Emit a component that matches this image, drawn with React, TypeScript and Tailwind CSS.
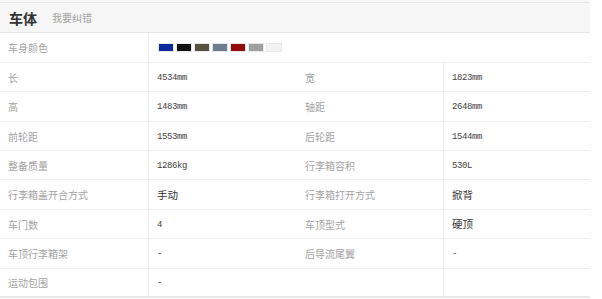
import React from "react";

const cjk = { fontFamily: '"Noto Sans CJK SC", "Noto Sans", sans-serif' };
const mono = { fontFamily: '"Liberation Mono", "Noto Sans CJK SC", monospace' };

type Cell = { label: string; value: string; cjkValue?: boolean };
type Row = { h: string; cells: Cell[] };

const rows: Row[] = [
  { h: "h-[29px]", cells: [{ label: "长", value: "4534mm" }, { label: "宽", value: "1823mm" }] },
  { h: "h-[30px]", cells: [{ label: "高", value: "1483mm" }, { label: "轴距", value: "2648mm" }] },
  { h: "h-[29px]", cells: [{ label: "前轮距", value: "1553mm" }, { label: "后轮距", value: "1544mm" }] },
  { h: "h-[29px]", cells: [{ label: "整备质量", value: "1286kg" }, { label: "行李箱容积", value: "530L" }] },
  { h: "h-[30px]", cells: [{ label: "行李箱盖开合方式", value: "手动", cjkValue: true }, { label: "行李箱打开方式", value: "掀背", cjkValue: true }] },
  { h: "h-[29px]", cells: [{ label: "车门数", value: "4" }, { label: "车顶型式", value: "硬顶", cjkValue: true }] },
  { h: "h-[30px]", cells: [{ label: "车顶行李箱架", value: "-" }, { label: "后导流尾翼", value: "-" }] },
  { h: "h-[29px]", cells: [{ label: "运动包围", value: "-" }, { label: "", value: "" }] },
];

const swatches = ["#0d2a9c", "#111111", "#5a5241", "#6d7d8f", "#950a0a", "#a0a0a0", "#f3f3f3"];

export default function App() {
  return (
    <div className="w-[602px] h-[299px] bg-white overflow-hidden">
      <div className="w-[590px]">
        {/* header */}
        <div className="bg-[#f6f6f6] pt-[2px]">
          <div className="h-[31px] border-t border-b border-[#e6e6e6] flex items-center pl-[9px]">
            <span className="text-[14px] font-bold text-[#333] leading-none" style={cjk}>车体</span>
            <span className="ml-[15px] text-[10px] text-[#a3a3a3] leading-none" style={cjk}>我要纠错</span>
          </div>
        </div>
        {/* color row */}
        <div className="h-[30px] flex border-b border-[#eef0f0]">
          <div className="w-[149px] border-r border-[#eef0f0] flex items-center pl-[8px] text-[10px] text-[#a3a3a3]" style={cjk}>
            车身颜色
          </div>
          <div className="flex items-center pl-[9px] gap-[2px]">
            {swatches.map((c) => (
              <div key={c} className="w-[16px] h-[9px] border border-[#e8e8e8] flex">
                <div className="flex-1" style={{ backgroundColor: c }} />
              </div>
            ))}
          </div>
        </div>
        {rows.map((r, i) => (
          <div
            key={i}
            className={`${r.h} grid grid-cols-[149px_148px_147px_146px] ${i === rows.length - 1 ? "border-b-2 border-[#e8e8e8]" : "border-b border-[#eef0f0]"}`}
          >
            {r.cells.map((c, j) => (
              <React.Fragment key={j}>
                <div
                  className="flex items-center pl-[8px] text-[10px] text-[#a3a3a3] border-r border-[#eef0f0]"
                  style={cjk}
                >
                  {c.label}
                </div>
                <div
                  className={`flex items-center pl-[8px] ${c.cjkValue ? "text-[10.5px] text-[#333]" : "text-[9px] tracking-[-0.4px] text-[#444] pt-[3px]"}`}
                  style={c.cjkValue ? cjk : mono}
                >
                  {c.value}
                </div>
              </React.Fragment>
            ))}
          </div>
        ))}
      </div>
    </div>
  );
}
